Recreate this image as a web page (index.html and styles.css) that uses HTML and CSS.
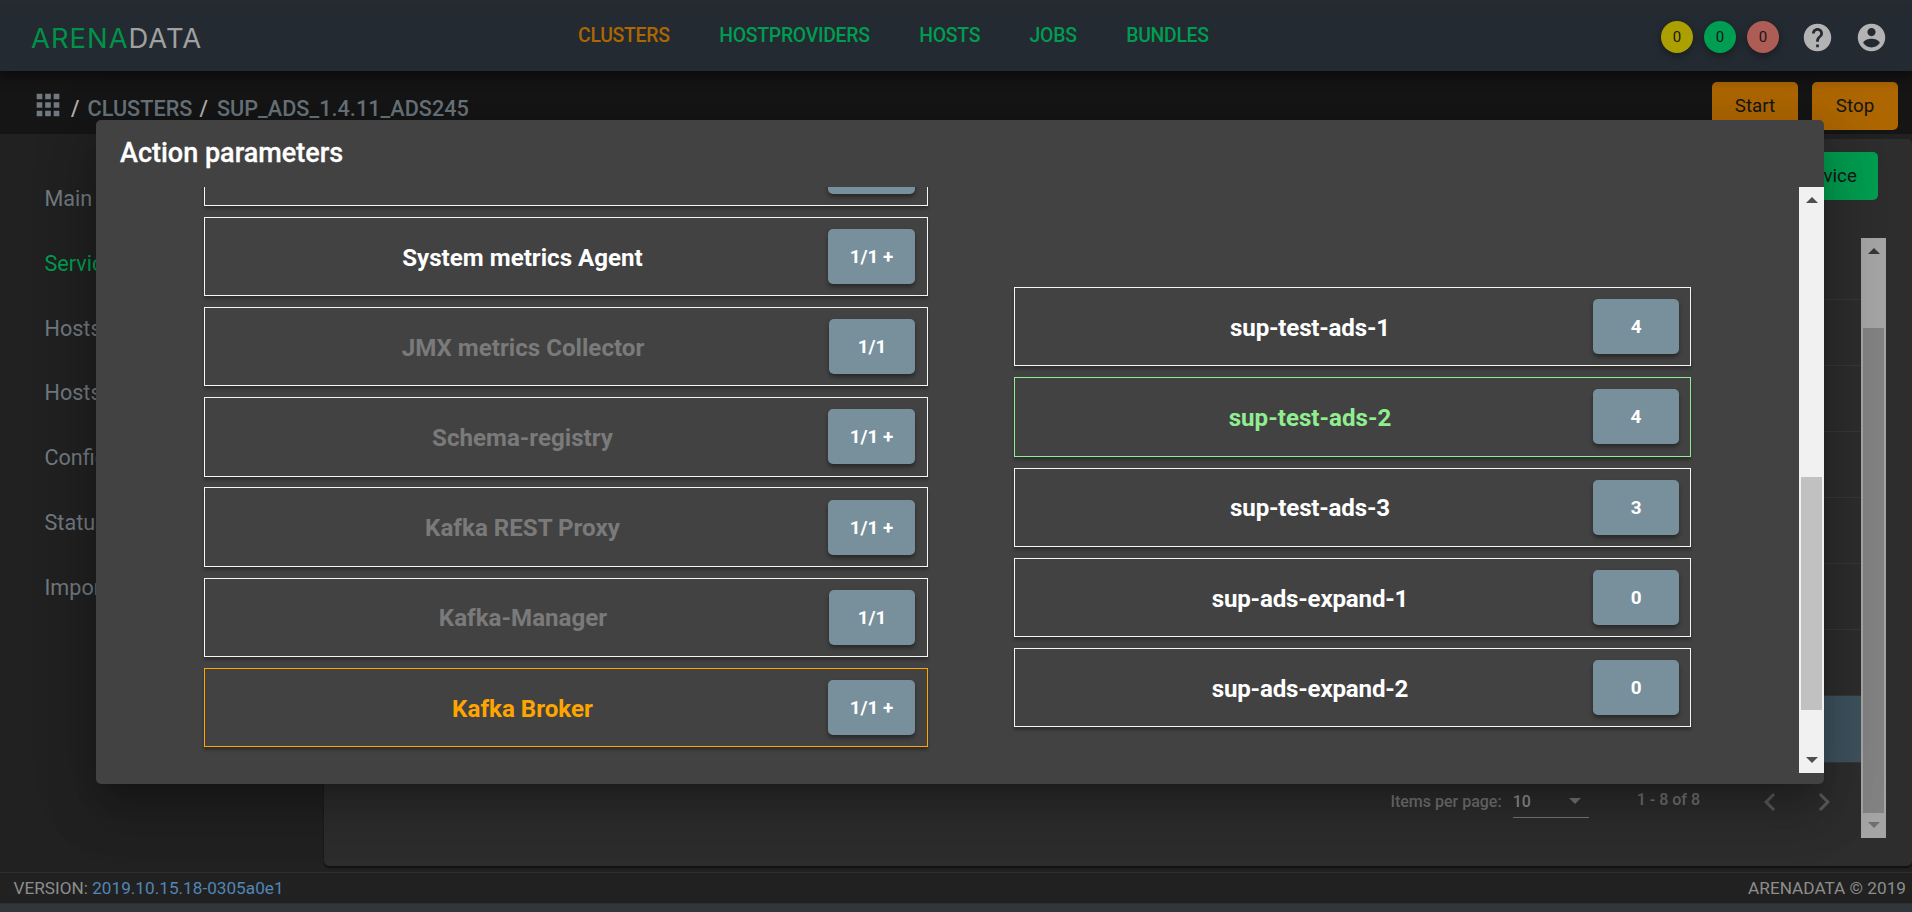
FILE: index.html
```
<!DOCTYPE html>
<html lang="en">
<head>
<meta charset="utf-8">
<title>Arenadata Cluster Manager</title>
<link rel="stylesheet" href="styles.css">
</head>
<body>
<div class="app">
  <header class="topbar">
    <div class="logo"><span class="logo-a">ARENA</span><span class="logo-b">DATA</span></div>
    <nav class="nav"><a class="active">CLUSTERS</a><a>HOSTPROVIDERS</a><a>HOSTS</a><a>JOBS</a><a>BUNDLES</a></nav>
    <div class="tools">
      <span class="dot yellow">0</span><span class="dot green">0</span><span class="dot red">0</span>
      <svg class="ico help" viewBox="0 0 24 24"><path d="M12 2C6.48 2 2 6.48 2 12s4.48 10 10 10 10-4.48 10-10S17.52 2 12 2zm1 17h-2v-2h2v2zm2.07-7.75l-.9.92C13.45 12.9 13 13.5 13 15h-2v-.5c0-1.1.45-2.1 1.17-2.83l1.24-1.26c.37-.36.59-.86.59-1.41 0-1.1-.9-2-2-2s-2 .9-2 2H8c0-2.21 1.79-4 4-4s4 1.79 4 4c0 .88-.36 1.68-.93 2.25z"/></svg>
      <svg class="ico" viewBox="0 0 24 24"><path d="M12 2C6.48 2 2 6.48 2 12s4.48 10 10 10 10-4.48 10-10S17.52 2 12 2zm0 3c1.66 0 3 1.34 3 3s-1.34 3-3 3-3-1.34-3-3 1.34-3 3-3zm0 14.2c-2.5 0-4.71-1.28-6-3.22.03-1.99 4-3.08 6-3.08 1.99 0 5.97 1.09 6 3.08-1.29 1.94-3.5 3.22-6 3.22z"/></svg>
    </div>
  </header>
  <div class="crumbs">
    <svg class="grid-ico" viewBox="0 0 24 24"><path d="M4 8h4V4H4v4zm6 12h4v-4h-4v4zm-6 0h4v-4H4v4zm0-6h4v-4H4v4zm6 0h4v-4h-4v4zm6-10v4h4V4h-4zm-6 4h4V4h-4v4zm6 6h4v-4h-4v4zm0 6h4v-4h-4v4z"/></svg>
    <span class="slash s1">/</span><span class="crumb c1">CLUSTERS</span><span class="slash s2">/</span><span class="crumb">SUP_ADS_1.4.11_ADS245</span>
    <div class="actions"><button class="btn orange">Start</button><button class="btn orange">Stop</button></div>
  </div>
  <main class="main">
    <aside class="side"><a>Main</a><a class="on">Services</a><a>Hosts</a><a>Hosts - Components</a><a>Configuration</a><a>Status</a><a>Import</a></aside>
    <section class="card">
      <button class="btn add">Add service</button>
      <div class="table-wrap">
        <div class="table"><i></i><i></i><i></i><i></i><i></i><i></i><i></i><i class="sel"></i>
          <div class="pager"><span class="ipp">Items per page:</span><span class="select">10<b></b></span><span class="range">1 - 8 of 8</span>
            <svg class="chev" viewBox="0 0 24 24"><path d="M15.41 7.41L14 6l-6 6 6 6 1.41-1.41L10.83 12z"/></svg><svg class="chev" viewBox="0 0 24 24"><path d="M10 6L8.59 7.41 13.17 12l-4.58 4.59L10 18l6-6z"/></svg>
          </div>
        </div>
        <div class="bar outer"><span class="up"></span><span class="thumb"></span><span class="down"></span></div>
      </div>
    </section>
  </main>
  <footer class="footer"><span>VERSION: <a>2019.10.15.18-0305a0e1</a></span><span>ARENADATA © 2019</span></footer>
  <div class="strip"></div>
</div>
<div class="dialog">
  <h2>Action parameters</h2>
  <div class="viewport">
    <div class="scrolled">
      <div class="col left">
        <div class="item"><span class="name"></span><span class="badge wide"></span></div>
        <div class="item"><span class="name">System metrics Agent</span><span class="badge wide">1/1 +</span></div>
        <div class="item dim"><span class="name">JMX metrics Collector</span><span class="badge">1/1</span></div>
        <div class="item dim"><span class="name">Schema-registry</span><span class="badge wide">1/1 +</span></div>
        <div class="item dim"><span class="name">Kafka REST Proxy</span><span class="badge wide">1/1 +</span></div>
        <div class="item dim"><span class="name">Kafka-Manager</span><span class="badge">1/1</span></div>
        <div class="item picked"><span class="name">Kafka Broker</span><span class="badge wide">1/1 +</span></div>
      </div>
      <div class="col right">
        <div class="item"><span class="name">sup-test-ads-1</span><span class="badge">4</span></div>
        <div class="item chosen"><span class="name">sup-test-ads-2</span><span class="badge">4</span></div>
        <div class="item"><span class="name">sup-test-ads-3</span><span class="badge">3</span></div>
        <div class="item"><span class="name">sup-ads-expand-1</span><span class="badge">0</span></div>
        <div class="item"><span class="name">sup-ads-expand-2</span><span class="badge">0</span></div>
      </div>
    </div>
    <div class="bar inner"><span class="up"></span><span class="thumb"></span><span class="down"></span></div>
  </div>
</div>
</body>
</html>
```
FILE: styles.css
```
* { box-sizing: border-box; }
body { margin: 0; width: 1912px; height: 912px; overflow: hidden; background: #212121; font-family: Roboto, sans-serif; }
button { font: inherit; border: 0; padding: 0; }
.app { display: flex; flex-direction: column; height: 912px; }
.topbar { position: relative; z-index: 1; flex: none; display: flex; align-items: center; height: 71px; background: #232a31; border-top: 1px solid #2b2b2b; box-shadow: 0 3px 12px 2px rgba(0,0,0,.5); padding-left: 31px; }
.logo { width: 180px; font: 400 27.4px/30px Inter, sans-serif; letter-spacing: 1px; padding-top: 3px; white-space: nowrap; }
.logo-a { color: #009249; }
.logo-b { color: #a0a0a0; }
.nav { display: flex; gap: 49.5px; margin-left: 367px; font-size: 19.4px; letter-spacing: -0.27px; font-weight: 500; color: #009d50; line-height: 24px; padding-bottom: 1px; }
.nav .active { color: #ad6600; }
.tools { margin-left: auto; display: flex; align-items: center; padding-right: 24px; padding-top: 2px; }
.dot { width: 32px; height: 32px; border-radius: 50%; margin-right: 11px; text-align: center; font-size: 15px; line-height: 33px; color: #161616; box-shadow: 0 3px 8px rgba(0,0,0,.35); }
.yellow { background: #aca000; }
.green { background: #009e52; }
.red { background: #ae5c56; }
.ico { width: 33px; height: 33px; fill: #b3b3b3; }
.help { margin-left: 11px; margin-right: 21px; }
.crumbs { flex: none; height: 63px; background: #151515; display: flex; padding: 11px 14px 0 31px; font-size: 21.7px; font-weight: 500; color: #68737a; }
.grid-ico { width: 34px; height: 34px; fill: #717a80; margin-top: 6px; }
.crumb, .slash { padding-top: 14px; }
.slash { color: #b0b0b0; }
.s1 { margin: 0 8px 0 6px; }
.s2 { margin: 0 9px 0 7px; }
.actions { margin-left: auto; display: flex; gap: 14px; }
.btn { height: 48px; width: 86px; border-radius: 5px; font-size: 18.8px; font-weight: 400; color: #151515; }
.orange { background: #ad6600; }
.main { flex: 1; display: flex; min-height: 0; }
.side { width: 324px; flex: none; padding: 52px 0 0 44.5px; display: flex; flex-direction: column; font-size: 21.6px; color: #717a80; }
.side a { height: 64.8px; line-height: 26px; white-space: nowrap; }
.side .on { color: #009d50; }
.card { flex: 1; margin: 5px 0 6px; background: #2d2d2d; border-radius: 5px; box-shadow: 0 2px 2px rgba(0,0,0,.5); padding: 13px 26px 0 0; display: flex; flex-direction: column; align-items: flex-end; }
.add { background: #009d50; width: 140px; margin-right: 8px; flex: none; }
.table-wrap { margin-top: 38px; width: 100%; height: 600px; display: flex; }
.table { flex: 1; }
.table i { display: block; height: 66px; border-bottom: 1px solid #373737; }
.table i:first-child { height: 62px; }
.table i.sel { height: 67px; background: #3e525d; }
.pager { display: flex; padding: 25px 19px 0 0; justify-content: flex-end; font-size: 16px; font-weight: 500; color: #747474; }
.ipp { margin-right: 11px; padding-top: 4px; }
.select { width: 76px; height: 30px; padding-top: 4px; color: #929292; font-size: 16px; border-bottom: 1px solid #777; margin-right: 48px; }
.select b { float: right; margin: 6px 8px 0; border: 6.5px solid transparent; border-top-color: #777; border-bottom: 0; }
.range { margin: 2px 52px 0 0; }
.chev { width: 36px; height: 36px; fill: #5c5c5c; margin: -4px 0 0; }
.chev + .chev { margin-left: 18px; }
.bar { width: 25px; display: flex; flex-direction: column; align-items: center; flex: none; }
.up, .down { border: 6px solid transparent; }
.up { border-top: 0; border-bottom-color: #4f4f4f; margin-top: 10px; }
.down { border-bottom: 0; border-top-color: #4f4f4f; margin-top: auto; margin-bottom: 10px; }
.thumb { width: 21px; }
.outer { background: #a4a4a4; }
.outer .thumb { background: #828282; height: 485px; margin-top: 74px; }
.outer .up { border-bottom-color: #353535; }
.outer .down { border-top-color: #6f6f6f; }
.footer { flex: none; height: 32px; border-top: 1px solid #2f2f2f; border-bottom: 1px solid #2f2f2f; display: flex; justify-content: space-between; padding: 0 6px 0 13.5px; font-size: 17.2px; line-height: 31px; color: #8d8d8d; }
.footer a { color: #5286b5; }
.strip { flex: none; height: 8px; background: #31363b; }
.dialog { position: absolute; left: 96px; top: 120px; width: 1728px; height: 664px; background: #424242; border-radius: 5px; color: #fff; box-shadow: 0 15px 20px -9px rgba(0,0,0,.2), 0 32px 50px 4px rgba(0,0,0,.14), 0 12px 60px 10px rgba(0,0,0,.12); }
.dialog h2 { margin: 0; height: 67px; padding: 17px 0 0 24px; font-size: 27px; line-height: 32px; font-weight: 500; -webkit-text-stroke: .3px #fff; }
.viewport { height: 586px; overflow: hidden; display: flex; }
.scrolled { flex: 1; display: flex; align-items: flex-start; padding-left: 108px; }
.col { display: grid; gap: 11px; }
.left { width: 724px; margin-top: -60.3px; gap: 10.9px; }
.right { width: 677px; margin: 100px 0 0 86px; }
.item { height: 79.3px; border: 1px solid #f5f5f5; display: flex; align-items: center; padding: 0 12px; font-size: 24.15px; font-weight: 700; box-shadow: 0 3px 3px rgba(0,0,0,.3); }
.right .item { padding-right: 11px; letter-spacing: -0.2px; }
.right .item.chosen { letter-spacing: 0; }
.name { flex: 1; text-align: center; padding-top: 2.4px; }
.badge { flex: none; width: 86px; height: 55px; border-radius: 5px; background: #78909c; text-align: center; font-size: 18.9px; line-height: 56px; box-shadow: 0 3px 4px rgba(0,0,0,.4); }
.badge.wide { width: 87px; }
.dim .name { color: #7a7a7a; }
.picked { border-color: orange; }
.picked .name { color: orange; }
.chosen { border-color: lightgreen; }
.chosen .name { color: lightgreen; }
.inner { background: #f1f1f1; }
.inner .thumb { background: #c1c1c1; height: 233px; margin-top: 274px; }
```
